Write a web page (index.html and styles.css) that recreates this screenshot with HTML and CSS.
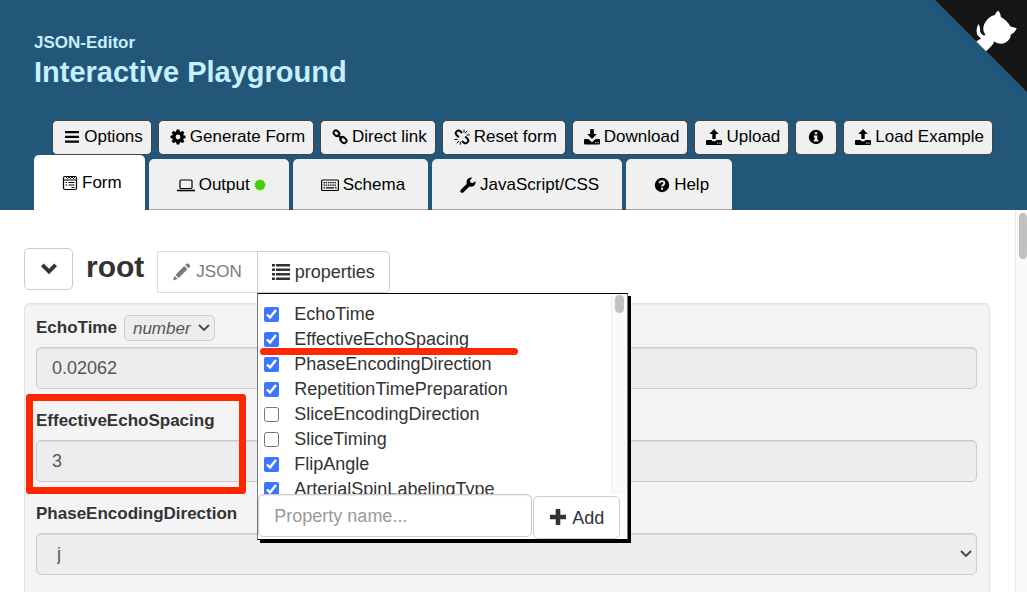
FILE: index.html
```html
<!DOCTYPE html>
<html lang="en">
<head>
<meta charset="utf-8">
<title>JSON-Editor Interactive Playground</title>
<link rel="stylesheet" href="styles.css">
</head>
<body>
<svg class="sprite" aria-hidden="true">
  <symbol id="upload" viewBox="0 0 16 16"><path d="M8 0l4.600 5H9.700v5H6.300V5H3.400zM1 11h4.500c.4 1 1.200 1.300 2.500 1.300s2.100-.3 2.500-1.300H15q1 0 1 1v3q0 1-1 1H1q-1 0-1-1v-3q0-1 1-1zm10.200 2.500v1.200h1.100v-1.200zm2.300 0v1.200h1.100v-1.200z"/></symbol>
</svg>
<header class="header">
  <div class="brand">
    <p class="brand-name">JSON-Editor</p>
    <h1 class="brand-title">Interactive Playground</h1>
  </div>
  <a class="corner" href="#" aria-label="View source on GitHub">
    <svg viewBox="0 0 250 250"><path fill="#151513" d="M0 0l250 250V0z"/><g fill="#fff"><path d="M118 65C112 76 111 90 118 98 122 104 126 103 127 107L138 98C130 96 125 92 123 86 122 79 124 74 118 65z"/><path d="M112 113L126 104 137 94C128 84 130 68 140 56 146 48 153 43 163 41 164 36 168 31 172 29 176 33 178 38 179 46 189 51 199 61 205 72 211 73 216 75 222 77 219 84 214 91 206 94 206 104 199 113 189 117 179 121 168 118 160 112 160 117 158 120 154 124L139 139z"/></g></svg>
  </a>
  <div class="toolbar">
    <button class="tool" type="button"><svg class="icon" viewBox="0 0 16 16"><path d="M1 2h14v2.300H1zm0 4.700h14V9H1zm0 4.700h14v2.300H1z"/></svg>Options</button>
    <button class="tool" type="button"><svg class="icon" viewBox="0 0 16 16"><path fill-rule="evenodd" d="M6.600.5h2.800l.4 2 .9.400 1.800-1.200 1.900 2-1.200 1.700.4.900 1.900.4v2.500l-1.900.4-.4 1 1.200 1.700-1.900 1.900-1.800-1.200-.9.400-.4 2H6.600l-.4-2-.9-.4-1.800 1.200-1.900-1.900 1.200-1.700-.4-1-1.900-.4V6.700l1.900-.4.400-.9-1.200-1.700 1.900-2 1.800 1.200.9-.4zM8 5.600a2.400 2.400 0 100 4.800 2.400 2.400 0 000-4.800z"/></svg>Generate Form</button>
    <button class="tool" type="button"><svg class="icon line" viewBox="0 0 16 16" stroke-width="1.900"><rect x="1.400" y="2" width="6.200" height="4.600" rx="2.300" transform="rotate(45 4.500 4.300)"/><rect x="8" y="8.600" width="6.800" height="4.800" rx="2.400" transform="rotate(45 11.400 11)"/><path d="M5.500 5.500l4.500 4.500"/></svg>Direct link</button>
    <button class="tool" type="button"><svg class="icon line" viewBox="0 0 16 16"><path stroke-width="2" d="M8 4L6.500 2.300Q4.500.6 2.600 2.500T2.600 6.100L4.800 8.300M8 12l1.500 1.600q2 1.700 3.900-.2t0-3.800L11.200 7.600"/><path d="M10 .5v3M13.300 1.800l-2.300 2.400M15.700 6h-3M.5 10.500h3M2.800 14.300l2.200-2.400M6.300 15.700v-3"/></svg>Reset form</button>
    <button class="tool" type="button"><svg class="icon" viewBox="0 0 16 16"><path d="M6.200 0h3.600v5h3L8 10 3.200 5h3zM1 10h3.300L8 13.200 11.700 10H15q1 0 1 1v3.500q0 1-1 1H1q-1 0-1-1V11q0-1 1-1zm10.200 3v1.200h1.100V13zm2.300 0v1.200h1.100V13z"/></svg>Download</button>
    <button class="tool" type="button"><svg class="icon"><use href="#upload"/></svg>Upload</button>
    <button class="tool tool-info" type="button" aria-label="Information"><svg class="icon" viewBox="0 0 16 16"><path fill-rule="evenodd" d="M8 .8a7.200 7.200 0 100 14.400A7.200 7.200 0 008 .8zM6.700 3.200h2.600v2.100H6.700zM5.800 6.500h3.500v4.300h1v1.800H5.800v-1.800h.9V8.300h-.9z"/></svg></button>
    <button class="tool" type="button"><svg class="icon"><use href="#upload"/></svg>Load Example</button>
  </div>
  <nav class="tabs">
    <a class="tab active" href="#form"><svg class="icon line" viewBox="0 0 16 16"><rect x="1.500" y="1.500" width="13" height="13" rx="1.500" stroke-width="1.200"/><path stroke-width="1" d="M2 5h12.500M4 2l1.500 1.500L7 2l1.500 1.500L10 2l1.500 1.500L13 2M3.500 7.500h1.500M6.500 7.500h6M3.500 10h1.500M6.500 10h6M9.500 12.500h3"/></svg>Form</a>
    <a class="tab" href="#output"><svg class="icon wide line" viewBox="0 0 18 16"><rect x="3" y="3" width="12" height="8.500" rx="1" stroke-width="1.200"/><path stroke-width="1.600" d="M0 13.500h18"/></svg>Output<svg class="dot" viewBox="0 0 12 12"><circle cx="6" cy="6" r="4.800" fill="#43cf09" stroke="#43cf09" stroke-width="1.500" stroke-dasharray="1.500 1"/></svg></a>
    <a class="tab" href="#schema"><svg class="icon wide line" viewBox="0 0 18 16"><rect x=".6" y="3" width="16.800" height="10.500" rx="1" stroke-width="1.200"/><path stroke-width="1.300" stroke-dasharray="1.400 .8" d="M2.500 5.600h13M2.500 8.200h13"/><path stroke-width="1.300" d="M2.500 10.900h1.500M5 10.900h8M14 10.900h1.500"/></svg>Schema</a>
    <a class="tab" href="#javascript"><svg class="icon" viewBox="0 0 16 16"><path d="M15.400 4.300a4.500 4.500 0 01-5.900 5.200l-6 5.800a1.800 1.800 0 01-2.600-2.600l6-5.900A4.500 4.500 0 0112.300.7L9.900 3.200l.5 2.400 2.400.5z"/></svg>JavaScript/CSS</a>
    <a class="tab" href="#help"><svg class="icon" viewBox="0 0 16 16"><circle cx="8" cy="8" r="7.200"/><path d="M5.500 6.200C5.700 3.300 10.600 3.500 10.400 6.300 10.300 8 8 7.700 8 9.600" fill="none" stroke="#f0f0f0" stroke-width="1.900"/><path fill="#f0f0f0" d="M7 10.700h2v2H7z"/></svg>Help</a>
  </nav>
</header>
<div class="page">
  <main class="content">
    <div class="root-head">
      <button class="btn toggle" type="button" aria-label="Collapse"><svg class="glyph" viewBox="0 0 18 18"><path d="M1 6.200l2.700-2.600L9 8.800l5.300-5.200L17 6.200l-8 8z"/></svg></button>
      <h2 class="root-title">root</h2>
      <div class="btn-group">
        <button class="btn btn-json" type="button" disabled><svg class="glyph" viewBox="0 0 18 18"><path d="M0 17.500L1.500 12.800 4.700 16zM2.500 11.800l8.800-8.800 3.200 3.200-8.800 8.800zM12.300 2l1.300-1.300q.9-.8 1.800 0l1.400 1.400q.8.900 0 1.800L15.500 5.200z"/></svg>JSON</button>
        <button class="btn btn-props" type="button"><svg class="glyph" viewBox="0 0 18 18"><path d="M0 1h3v2.500H0zm4 0h14v2.500H4zM0 5.500h3V8H0zm4 0h14V8H4zM0 10h3v2.500H0zm4 0h14v2.500H4zM0 14.500h3V17H0zm4 0h14V17H4z"/></svg>properties</button>
        <div class="popup">
          <div class="popup-scroll">
            <ul class="props">
              <li><label class="prop"><input type="checkbox" checked>EchoTime</label></li>
              <li class="underlined"><label class="prop"><input type="checkbox" checked>EffectiveEchoSpacing</label></li>
              <li><label class="prop"><input type="checkbox" checked>PhaseEncodingDirection</label></li>
              <li><label class="prop"><input type="checkbox" checked>RepetitionTimePreparation</label></li>
              <li><label class="prop"><input type="checkbox">SliceEncodingDirection</label></li>
              <li><label class="prop"><input type="checkbox">SliceTiming</label></li>
              <li><label class="prop"><input type="checkbox" checked>FlipAngle</label></li>
              <li><label class="prop"><input type="checkbox" checked>ArterialSpinLabelingType</label></li>
            </ul>
            <div class="popup-track"><div class="popup-thumb"></div></div>
          </div>
          <div class="popup-add">
            <input class="new-prop" type="text" placeholder="Property name..." aria-label="Property name">
            <button class="btn btn-add" type="button"><svg class="glyph" viewBox="0 0 18 18"><path d="M6.700 0h4.600v5.700H17v4.600h-5.700V16H6.700v-5.700H1V5.700h5.700z"/></svg>Add</button>
          </div>
        </div>
      </div>
    </div>
    <section class="panel">
      <div class="field">
        <div class="field-head"><label class="field-label" for="echo">EchoTime</label><select class="type" aria-label="EchoTime type"><option>number</option></select></div>
        <input class="control" id="echo" type="text" value="0.02062">
      </div>
      <div class="field marked">
        <div class="field-head"><label class="field-label" for="spacing">EffectiveEchoSpacing</label></div>
        <input class="control" id="spacing" type="text" value="3">
      </div>
      <div class="field">
        <div class="field-head"><label class="field-label" for="phase">PhaseEncodingDirection</label></div>
        <select class="control drop" id="phase"><option>j</option></select>
      </div>
    </section>
  </main>
  <div class="track"><div class="thumb"></div></div>
</div>
</body>
</html>
```
FILE: styles.css
```css
*, *::after { box-sizing: border-box; }
html, body { height: 100%; }
body {
  margin: 0;
  display: flex;
  flex-direction: column;
  overflow: hidden;
  background: #fff;
  color: #333;
  font-family: "Liberation Sans", Arial, sans-serif;
  font-size: 18px;
}
button, input, select { font: inherit; color: inherit; margin: 0; }
.sprite { display: none; }

.header {
  position: relative;
  flex: none;
  background: #225779;
  color: #000;
  padding: 33px 34px 0;
  font-size: 17px;
}
.brand { color: #c6f0ff; font-weight: bold; }
.brand-name { margin: 0; line-height: 20px; }
.brand-title { margin: 0; font-size: 29px; line-height: 38px; }
.corner { position: absolute; top: 0; right: 0; width: 92px; height: 92px; }
.corner svg { display: block; width: 100%; height: 100%; }

.toolbar { display: flex; justify-content: flex-end; gap: 6px; margin-top: 29px; }
.tool {
  display: flex;
  align-items: center;
  gap: 4px;
  height: 35px;
  padding: 0 8px 2px 11px;
  border: 1px solid #444;
  border-radius: 5px;
  background: #f0f0f0;
  color: #000;
  white-space: nowrap;
}
.tool-info { padding: 0 12px 2px; }
.icon { flex: none; width: 16px; height: 16px; fill: currentColor; }
.icon.wide { width: 18px; }
.icon.line { fill: none; stroke: currentColor; }

.tabs { display: flex; align-items: flex-end; gap: 4px; }
.tab {
  display: flex;
  align-items: center;
  gap: 4px;
  height: 51px;
  padding: 2px 23px 0 28px;
  border-bottom: 1px solid #aaa;
  border-radius: 5px 5px 0 0;
  background: #f0f0f0;
  color: #000;
  text-decoration: none;
}
.tab.active { height: 55px; background: #fff; border-color: #fff; }
.dot { width: 12px; height: 12px; }

.page { flex: 1; min-height: 0; display: flex; }
.content { flex: 1; min-width: 0; display: flex; flex-direction: column; padding: 38px 25px 0 24px; }
.track { flex: none; width: 12px; padding: 3px 0 0 3px; border-left: 1px solid #e8e8e8; background: #fafafa; }
.thumb { height: 46px; border-radius: 4px; background: #c1c1c1; }

.root-head { flex: none; display: flex; height: 45px; }
.btn {
  display: flex;
  align-items: center;
  justify-content: center;
  gap: 5px;
  height: 42px;
  padding: 0 15px;
  border: 1px solid #ccc;
  border-radius: 5px;
  background: #fff;
  color: #333;
  white-space: nowrap;
}
.glyph { flex: none; width: 18px; height: 18px; fill: currentColor; }
.toggle { width: 49px; padding: 0; }
.root-title { margin: 0 13px; font-size: 30px; line-height: 38px; }
.btn-group { position: relative; display: flex; align-items: flex-end; }
.btn-json { border-color: #ddd; border-radius: 0; color: #7a7a7a; font-size: 17px; }
.btn-props { border-radius: 0 5px 5px 0; margin-left: -1px; padding: 0 14px; }

.popup {
  position: absolute;
  z-index: 2;
  top: 45px;
  left: 100px;
  width: 371px;
  background: #fff;
  border: 1px solid;
  border-color: #000 #777;
  box-shadow: 3px 3px 0 #000;
}
.popup-scroll { display: flex; height: 200px; overflow: hidden; }
.props { flex: 1; list-style: none; margin: 0; padding: 8px 0 0 6px; }
.prop { display: flex; align-items: center; gap: 15px; height: 25px; }
.prop input { width: 15px; height: 15px; accent-color: #3b76ff; }
.underlined { position: relative; }
.underlined::after {
  content: "";
  position: absolute;
  top: 21px;
  left: -4px;
  width: 258px;
  height: 7px;
  border-radius: 4px;
  background: #ff2600;
}
.popup-track { flex: none; width: 16px; padding: 1px 3px; border-left: 1px solid #eee; background: #fafafa; }
.popup-thumb { width: 9px; height: 18px; border-radius: 5px; background: #c1c1c1; }
.popup-add { display: flex; align-items: flex-end; gap: 1px; padding-right: 7px; height: 45px; }
.new-prop {
  flex: 1;
  min-width: 0;
  height: 43px;
  align-self: flex-start;
  padding: 2px 15px 0;
  border: 1px solid #ccc;
  border-radius: 5px;
  background: #fff;
  box-shadow: inset 0 1px 1px rgba(0, 0, 0, .08);
}
.new-prop::placeholder { color: #999; opacity: 1; }
.btn-add { width: 87px; height: 43px; padding: 1px 0 0; }

.panel {
  flex: 1;
  min-height: 0;
  margin-top: 10px;
  padding: 11px 12px 0 11px;
  border: 1px solid #e3e3e3;
  border-bottom: 0;
  border-radius: 5px 5px 0 0;
  background: #f4f4f4;
  box-shadow: inset 0 1px 1px rgba(0, 0, 0, .05);
}
.field { position: relative; }
.field + .field { margin-top: 19px; }
.field-head { display: flex; align-items: center; gap: 7px; height: 26px; margin-bottom: 6px; }
.field-label { font-weight: bold; font-size: 17px; }
.control {
  display: block;
  width: 100%;
  height: 42px;
  padding: 0 15px;
  border: 1px solid #ccc;
  border-radius: 5px;
  background: #ededed;
  color: #555;
  box-shadow: inset 0 1px 1px rgba(0, 0, 0, .08);
}
.type, .drop {
  appearance: none;
  background: #ededed url("data:image/svg+xml,%3Csvg xmlns='http://www.w3.org/2000/svg' width='12' height='8'%3E%3Cpath d='M1 1l5 5 5-5' fill='none' stroke='%23444' stroke-width='1.800'/%3E%3C/svg%3E") no-repeat right 4px center;
}
.type {
  width: 91px;
  height: 26px;
  padding: 0 8px;
  border: 1px solid #ccc;
  border-radius: 5px;
  color: #555;
  font-size: 17px;
  font-style: italic;
}
.drop { padding-left: 20px; }
.marked::after {
  content: "";
  position: absolute;
  top: -14px;
  left: -10px;
  width: 220px;
  height: 100px;
  border: 7px solid #ff2600;
  border-radius: 3px;
  pointer-events: none;
}
```
